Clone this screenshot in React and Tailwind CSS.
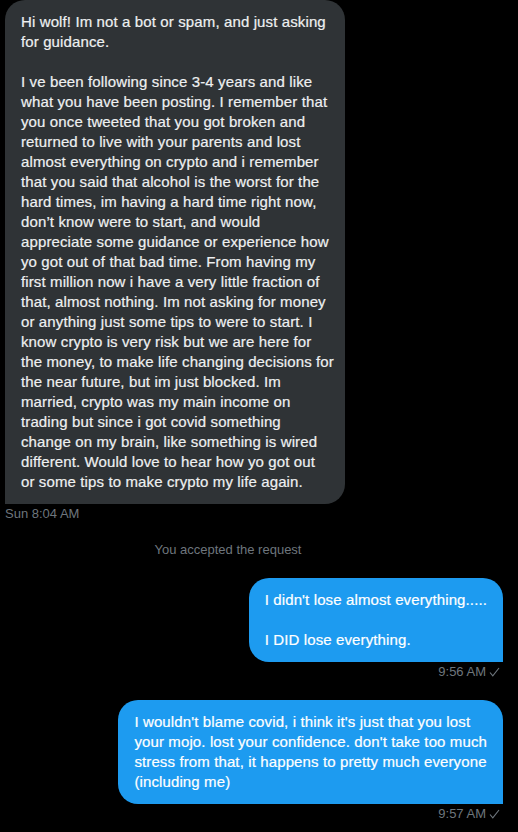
import React from 'react';

const FONT = "font-['Segoe_UI','Liberation_Sans',Arial,sans-serif]";

const incoming = [
  'Hi wolf! Im not a bot or spam, and just asking',
  'for guidance.',
  '',
  'I ve been following since 3-4 years and like',
  'what you have been posting. I remember that',
  'you once tweeted that you got broken and',
  'returned to live with your parents and lost',
  'almost everything on crypto and i remember',
  'that you said that alcohol is the worst for the',
  'hard times, im having a hard time right now,',
  'don\u2019t know were to start, and would',
  'appreciate some guidance or experience how',
  'yo got out of that bad time. From having my',
  'first million now i have a very little fraction of',
  'that, almost nothing. Im not asking for money',
  'or anything just some tips to were to start. I',
  'know crypto is very risk but we are here for',
  'the money, to make life changing decisions for',
  'the near future, but im just blocked. Im',
  'married, crypto was my main income on',
  'trading but since i got covid something',
  'change on my brain, like something is wired',
  'different. Would love to hear how yo got out',
  'or some tips to make crypto my life again.',
];

const reply1 = ["I didn't lose almost everything.....", '', 'I DID lose everything.'];

const reply2 = [
  "I wouldn't blame covid, i think it's just that you lost",
  "your mojo. lost your confidence. don't take too much",
  'stress from that, it happens to pretty much everyone',
  '(including me)',
];

// text in bubbles, a touch heavier to match the ClearType look
const bubbleText = 'text-[15px] leading-5 tracking-[0.12px] [-webkit-text-stroke:0.2px_currentColor]';

const Lines = ({ lines }) => (
  <>
    {lines.map((l, i) => (
      <div key={i} className="h-5 whitespace-nowrap">{l}</div>
    ))}
  </>
);

const Check = () => (
  <svg width="11" height="10" viewBox="0 0 11 10" className="ml-[3px]">
    <path d="M1 5.5 L3.8 8.8 L10 1" fill="none" stroke="#6e767d" strokeWidth="1.1" />
  </svg>
);

const Sent = ({ lines, time }) => (
  <div className="flex flex-col items-end">
    <div className={`bg-[#1d9bf0] text-white rounded-[20px] rounded-br-none px-4 py-3 ${bubbleText}`}>
      <Lines lines={lines} />
    </div>
    <div className="mt-[2px] flex items-center text-[13px] leading-4 text-[#6e767d] pr-[3px]">
      {time}
      <Check />
    </div>
  </div>
);

export default function App() {
  return (
    <div className={`min-h-[832px] bg-black pl-[5px] pr-[15px] ${FONT}`}>
      <div className="flex flex-col items-start">
        <div className={`w-[340px] bg-[#2f3336] text-[#eef0f1] rounded-[20px] rounded-bl-none px-4 py-3 ${bubbleText}`}>
          <Lines lines={incoming} />
        </div>
        <div className="mt-[2px] text-[13px] leading-4 text-[#6e767d]">Sun 8:04 AM</div>
      </div>
      <div className="mt-5 w-[446px] text-center text-[13px] leading-4 text-[#6e767d]">
        You accepted the request
      </div>
      <div className="mt-5">
        <Sent lines={reply1} time="9:56 AM" />
      </div>
      <div className="mt-5">
        <Sent lines={reply2} time="9:57 AM" />
      </div>
    </div>
  );
}
